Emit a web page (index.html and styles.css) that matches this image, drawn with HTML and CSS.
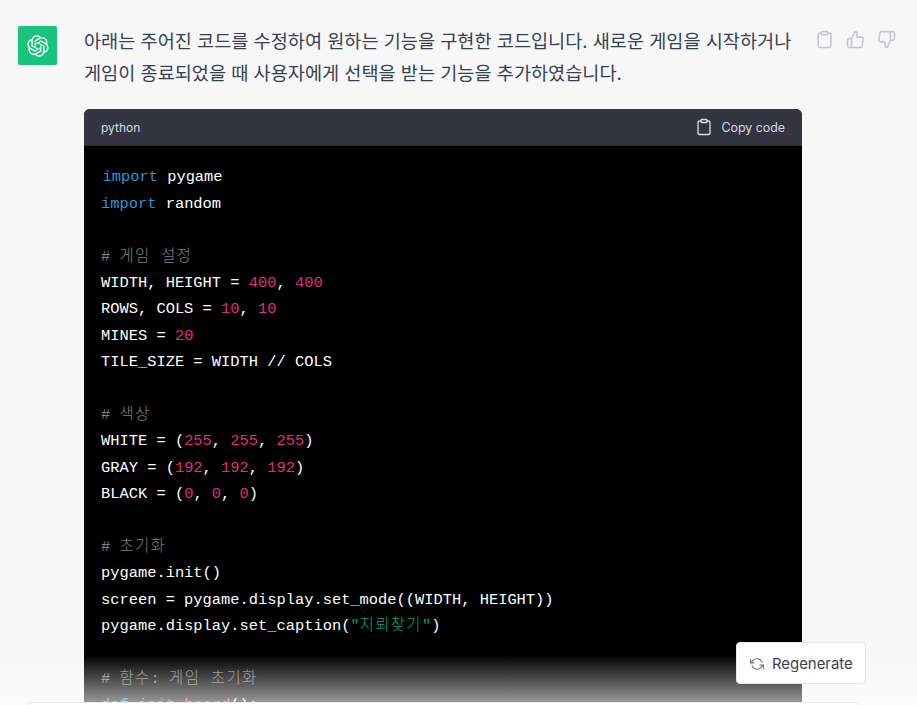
FILE: index.html
```html
<!DOCTYPE html>
<html lang="ko">
<head>
<meta charset="utf-8">
<title>ChatGPT</title>
<link rel="stylesheet" href="styles.css">
</head>
<body>
<main class="thread">
  <article class="message">
    <div class="avatar">
      <svg class="logo" viewBox="0 0 41 41" aria-hidden="true"><path fill="currentColor" d="M37.5324 16.8707C37.9808 15.5241 38.1363 14.0974 37.9886 12.6859C37.8409 11.2744 37.3934 9.91076 36.676 8.68622C35.6126 6.83404 33.9882 5.3676 32.0373 4.4985C30.0864 3.62941 27.9098 3.40259 25.8215 3.85078C24.8796 2.7893 23.7219 1.94125 22.4257 1.36341C21.1295 0.785575 19.7249 0.491269 18.3058 0.500197C16.1708 0.495044 14.0893 1.16803 12.3614 2.42214C10.6335 3.67624 9.34853 5.44666 8.6917 7.47815C7.30085 7.76286 5.98686 8.3414 4.8377 9.17505C3.68854 10.0087 2.73073 11.0782 2.02839 12.312C0.956464 14.1591 0.498905 16.2988 0.721698 18.4228C0.944492 20.5467 1.83612 22.5449 3.268 24.1293C2.81966 25.4759 2.66413 26.9026 2.81182 28.3141C2.95951 29.7256 3.40701 31.0892 4.12437 32.3138C5.18791 34.1659 6.8123 35.6322 8.76321 36.5013C10.7141 37.3704 12.8907 37.5973 14.9789 37.1492C15.9208 38.2107 17.0786 39.0587 18.3747 39.6366C19.6709 40.2144 21.0755 40.5087 22.4946 40.4998C24.6307 40.5054 26.7133 39.8321 28.4418 38.5772C30.1704 37.3223 31.4556 35.5506 32.1119 33.5179C33.5027 33.2332 34.8167 32.6547 35.9659 31.821C37.115 30.9874 38.0728 29.9178 38.7752 28.684C39.8458 26.8371 40.3023 24.6979 40.0789 22.5748C39.8556 20.4517 38.9639 18.4544 37.5324 16.8707ZM22.4978 37.8849C20.7443 37.8874 19.0459 37.2733 17.6994 36.1501C17.7601 36.117 17.8666 36.0586 17.936 36.0161L25.9004 31.4156C26.1003 31.3019 26.2663 31.137 26.3813 30.9378C26.4964 30.7386 26.5563 30.5124 26.5549 30.2825V19.0542L29.9213 20.998C29.9389 21.0068 29.9541 21.0198 29.9656 21.0359C29.977 21.052 29.9842 21.0707 29.9867 21.0902V30.3889C29.9842 32.375 29.1946 34.2791 27.7909 35.6841C26.3872 37.0892 24.4838 37.8806 22.4978 37.8849ZM6.39227 31.0064C5.51397 29.4888 5.19742 27.7107 5.49804 25.9832C5.55718 26.0187 5.66048 26.0818 5.73461 26.1244L13.699 30.7248C13.8975 30.8408 14.1233 30.902 14.3532 30.902C14.583 30.902 14.8088 30.8408 15.0073 30.7248L24.731 25.1103V28.9979C24.7321 29.0177 24.7283 29.0376 24.7199 29.0556C24.7115 29.0736 24.6988 29.0893 24.6829 29.1012L16.6317 33.7497C14.9096 34.7416 12.8643 35.0097 10.9447 34.4954C9.02506 33.9811 7.38785 32.7263 6.39227 31.0064ZM4.29707 13.6194C5.17156 12.0998 6.55279 10.9364 8.19885 10.3327C8.19885 10.4013 8.19491 10.5228 8.19491 10.6071V19.808C8.19351 20.0378 8.25334 20.2638 8.36823 20.4629C8.48312 20.6619 8.64893 20.8267 8.84863 20.9404L18.5723 26.5542L15.206 28.4979C15.1894 28.5089 15.1703 28.5155 15.1505 28.5173C15.1307 28.5191 15.1107 28.516 15.0924 28.5082L7.04046 23.8557C5.32135 22.8601 4.06716 21.2235 3.55289 19.3046C3.03862 17.3858 3.30624 15.3413 4.29707 13.6194ZM31.955 20.0556L22.2312 14.4411L25.5976 12.4981C25.6142 12.4872 25.6333 12.4805 25.6531 12.4787C25.6729 12.4769 25.6928 12.4801 25.7111 12.4879L33.7631 17.1364C34.9967 17.849 36.0017 18.8982 36.6606 20.1613C37.3194 21.4244 37.6047 22.849 37.4832 24.2684C37.3617 25.6878 36.8382 27.0432 35.9743 28.1759C35.1103 29.3086 33.9415 30.1717 32.6047 30.6641C32.6047 30.5947 32.6047 30.4733 32.6047 30.3889V21.188C32.6066 20.9586 32.5474 20.7328 32.4332 20.5338C32.319 20.3348 32.154 20.1698 31.955 20.0556ZM35.3055 15.0128C35.2464 14.9765 35.1431 14.9142 35.069 14.8717L27.1045 10.2712C26.906 10.1554 26.6803 10.0943 26.4504 10.0943C26.2206 10.0943 25.9948 10.1554 25.7963 10.2712L16.0726 15.8858V11.9982C16.0715 11.9783 16.0753 11.9585 16.0837 11.9405C16.0921 11.9225 16.1048 11.9068 16.1207 11.8949L24.1719 7.25025C25.4053 6.53903 26.8158 6.19376 28.2383 6.25482C29.6608 6.31589 31.0364 6.78077 32.2044 7.59508C33.3723 8.40939 34.2842 9.53945 34.8334 10.8531C35.3826 12.1667 35.5464 13.6095 35.3055 15.0128ZM14.2424 21.9419L10.8752 19.9981C10.8576 19.9893 10.8423 19.9763 10.8309 19.9602C10.8195 19.9441 10.8122 19.9254 10.8098 19.9058V10.6071C10.8107 9.18295 11.2173 7.78848 11.9819 6.58696C12.7466 5.38544 13.8377 4.42659 15.1275 3.82264C16.4173 3.21869 17.8524 2.99464 19.2649 3.1767C20.6775 3.35876 22.0089 3.93941 23.1034 4.85067C23.0427 4.88379 22.937 4.94215 22.8668 4.98473L14.9024 9.58517C14.7025 9.69878 14.5366 9.86356 14.4215 10.0626C14.3065 10.2616 14.2466 10.4877 14.2479 10.7175L14.2424 21.9419ZM16.071 17.9991L20.4018 15.4978L24.7325 17.9975V22.9985L20.4018 25.4983L16.071 22.9985V17.9991Z"/></svg>
    </div>
    <div class="content">
      <p class="answer">아래는 주어진 코드를 수정하여 원하는 기능을 구현한 코드입니다. 새로운 게임을 시작하거나 게임이 종료되었을 때 사용자에게 선택을 받는 기능을 추가하였습니다.</p>
      <section class="codeblock">
        <header class="codebar">
          <span>python</span>
          <span class="copy">
            <svg class="icon-copy" viewBox="0 0 24 24" aria-hidden="true"><path d="M16 4h2a2 2 0 0 1 2 2v14a2 2 0 0 1-2 2H6a2 2 0 0 1-2-2V6a2 2 0 0 1 2-2h2"/><rect x="8" y="2" width="8" height="4" rx="1"/></svg>
            Copy code
          </span>
        </header>
<pre class="code"><code><span class="indent"><span class="kw">import</span> pygame</span>
<span class="kw">import</span> random

<span class="cm"># <span class="ko">게임 설정</span></span>
WIDTH, HEIGHT = <span class="num">400</span>, <span class="num">400</span>
ROWS, COLS = <span class="num">10</span>, <span class="num">10</span>
MINES = <span class="num">20</span>
TILE_SIZE = WIDTH // COLS

<span class="cm"># <span class="ko">색상</span></span>
WHITE = (<span class="num">255</span>, <span class="num">255</span>, <span class="num">255</span>)
GRAY = (<span class="num">192</span>, <span class="num">192</span>, <span class="num">192</span>)
BLACK = (<span class="num">0</span>, <span class="num">0</span>, <span class="num">0</span>)

<span class="cm"># <span class="ko">초기화</span></span>
pygame.init()
screen = pygame.display.set_mode((WIDTH, HEIGHT))
pygame.display.set_caption(<span class="str">"<span class="ko">지뢰찾기</span>"</span>)

<span class="cm"># <span class="ko">함수</span>: <span class="ko">게임 초기화</span></span>
<span class="kw">def</span> <span class="fn">init_board</span>():</code></pre>
      </section>
    </div>
    <div class="actions">
      <svg class="icon-action" viewBox="0 0 24 24" aria-hidden="true"><path d="M16 4h2a2 2 0 0 1 2 2v14a2 2 0 0 1-2 2H6a2 2 0 0 1-2-2V6a2 2 0 0 1 2-2h2"/><rect x="8" y="2" width="8" height="4" rx="1"/></svg>
      <svg class="icon-action" viewBox="0 0 24 24" aria-hidden="true"><path d="M14 9V5a3 3 0 0 0-3-3l-4 9v11h11.28a2 2 0 0 0 2-1.7l1.38-9a2 2 0 0 0-2-2.3zM7 22H4a2 2 0 0 1-2-2v-7a2 2 0 0 1 2-2h3"/></svg>
      <svg class="icon-action" viewBox="0 0 24 24" aria-hidden="true"><path d="M10 15v4a3 3 0 0 0 3 3l4-9V2H5.72a2 2 0 0 0-2 1.7l-1.38 9a2 2 0 0 0 2 2.3zm7-13h2.67A2.31 2.31 0 0 1 22 4v7a2.31 2.31 0 0 1-2.33 2H17"/></svg>
    </div>
  </article>
</main>
<div class="fade"></div>
<button class="regen" type="button">
  <svg class="icon-regen" viewBox="0 0 24 24" aria-hidden="true"><polyline points="1 4 1 10 7 10"/><polyline points="23 20 23 14 17 14"/><path d="M20.49 9A9 9 0 0 0 5.64 5.64L1 10m22 4l-4.64 4.36A9 9 0 0 1 3.51 15"/></svg>
  Regenerate
</button>
<div class="composer"></div>
</body>
</html>
```

FILE: styles.css
```css
* { box-sizing: border-box; }

html, body {
  margin: 0;
  height: 705px;
  overflow: hidden;
  background: #f7f7f8;
}

body {
  position: relative;
  font-family: Inter, "Noto Sans CJK KR", sans-serif;
  color: #374151;
}

.thread { height: 705px; overflow: hidden; }

.message {
  display: flex;
  align-items: flex-start;
  padding: 24px 0 0 18px;
}

.avatar {
  flex: none;
  width: 39px;
  height: 39px;
  margin-top: 2px;
  margin-right: 27px;
  display: flex;
  align-items: center;
  justify-content: center;
  background: #19c37d;
  border-radius: 2px;
  color: #fff;
}

.logo { width: 22px; height: 22px; }

.content { flex: none; width: 718px; }

.answer {
  margin: 0 0 22px;
  width: 718px;
  font-family: "Noto Sans CJK KR", sans-serif;
  font-size: 18.6px;
  line-height: 31.5px;
  color: #374151;
}

.codeblock {
  border-radius: 6px 6px 0 0;
  background: #000;
  overflow: hidden;
}

.codebar {
  display: flex;
  align-items: center;
  justify-content: space-between;
  height: 37px;
  padding: 0 17px;
  background: #343541;
  color: #d9d9e3;
  font-size: 12px;
  border-bottom: 1px solid #26272f;
}

.copy {
  display: flex;
  align-items: center;
  gap: 8px;
  font-size: 12.4px;
}

.icon-copy {
  width: 18px;
  height: 18px;
  fill: none;
  stroke: currentColor;
  stroke-width: 1.8;
  stroke-linecap: round;
  stroke-linejoin: round;
}

.code {
  margin: 0;
  padding: 18.3px 17px 0;
  font-family: "Liberation Mono", "Noto Sans CJK KR", monospace;
  font-size: 15.4px;
  line-height: 26.4px;
  color: #fff;
}

.code code { font-family: inherit; }

.indent { margin-left: 1.5px; }
.kw { color: #2e95d3; }
.num { color: #df3079; }
.str { color: #00a67d; }
.fn { color: #f22c3d; }
.cm { color: rgba(255, 255, 255, 0.5); }
.ko { letter-spacing: 1.4px; font-weight: 300; }

.actions {
  flex: none;
  display: flex;
  gap: 12px;
  margin-left: 12.5px;
  margin-top: 6px;
}

.icon-action {
  width: 19px;
  height: 19px;
  fill: none;
  stroke: #c5c5d2;
  stroke-width: 2;
  stroke-linecap: round;
  stroke-linejoin: round;
}

.fade {
  position: absolute;
  left: 0;
  right: 0;
  top: 655px;
  height: 80px;
  background: linear-gradient(180deg, rgba(255, 255, 255, 0), #fff 100%);
}

.regen {
  position: absolute;
  left: 736px;
  top: 642px;
  width: 130px;
  height: 42px;
  display: flex;
  align-items: center;
  gap: 8px;
  padding: 1px 12px 0 13px;
  background: #fff;
  border: 1px solid #e5e5e5;
  border-radius: 4px;
  color: #40414f;
  font-family: Inter, sans-serif;
  font-size: 14.9px;
}

.icon-regen {
  width: 14px;
  height: 14px;
  fill: none;
  stroke: #777783;
  stroke-width: 2;
  stroke-linecap: round;
  stroke-linejoin: round;
}

.composer {
  position: absolute;
  left: 24px;
  top: 702px;
  width: 838px;
  height: 50px;
  background: #fff;
  border: 1px solid #ececec;
  border-radius: 8px;
}
```
